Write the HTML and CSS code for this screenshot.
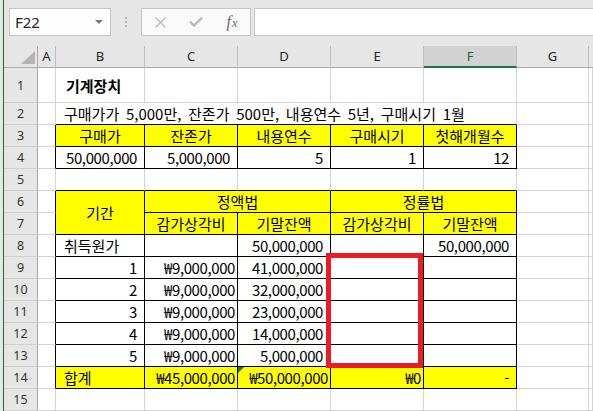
FILE: index.html
```html
<!DOCTYPE html>
<html lang="ko">
<head>
<meta charset="utf-8">
<title>Sheet</title>
<link rel="stylesheet" href="styles.css">
</head>
<body>
<div class="app">
  <div class="toolbar">
    <div class="namebox"><span class="nbtext">F22</span><span class="caret"></span></div>
    <div class="grip"><i></i><i></i><i></i></div>
    <div class="fxbtns">
      <span class="slot"><svg width="11" height="11" viewBox="0 0 11 11"><path d="M0.5 0.5 L10.5 10.5 M10.5 0.5 L0.5 10.5" stroke="#b9b9b9" stroke-width="1.3" fill="none"/></svg></span>
      <span class="slot"><svg width="14" height="10" viewBox="0 0 14 10"><path d="M1 4.5 L5 8.5 L13 0.8" stroke="#b9b9b9" stroke-width="2.4" fill="none"/></svg></span>
      <span class="slot fx"><i class="ff">f</i><i class="fxx">x</i></span>
    </div>
    <div class="formula"></div>
  </div>

  <div class="sheet">
    <!-- header -->
    <div class="corner"><span class="tri"></span></div>
    <div class="ch">A</div><div class="ch">B</div><div class="ch">C</div><div class="ch">D</div><div class="ch">E</div><div class="ch sel">F</div><div class="ch">G</div><div class="ch last"></div>

    <!-- row 1 -->
    <div class="rh">1</div><div></div><div class="l b">기계장치</div><div></div><div></div><div></div><div></div><div></div><div></div>

    <!-- row 2 -->
    <div class="rh">2</div><div></div><div class="l span5 kb ws">구매가가 5,000만, 잔존가 500만, 내용연수 5년, 구매시기 1월</div><div></div><div></div>

    <!-- row 3 -->
    <div class="rh">3</div><div class="kr"></div>
    <div class="k y c">구매가</div><div class="k y c">잔존가</div><div class="k y c">내용연수</div><div class="k y c">구매시기</div><div class="k y c">첫해개월수</div>
    <div></div><div></div>

    <!-- row 4 -->
    <div class="rh">4</div><div class="kr"></div>
    <div class="k r">50,000,000</div><div class="k r">5,000,000</div><div class="k r">5</div><div class="k r">1</div><div class="k r">12</div>
    <div></div><div></div>

    <!-- row 5 -->
    <div class="rh">5</div><div></div>
    <div class="kb"></div><div class="kb"></div><div class="kb"></div><div class="kb"></div><div class="kb"></div>
    <div></div><div></div>

    <!-- row 6 -->
    <div class="rh">6</div><div class="kr"></div>
    <div class="k y c rows2">기간</div>
    <div class="k y c span2">정액법</div>
    <div class="k y c span2">정률법</div>
    <div></div><div></div>

    <!-- row 7 -->
    <div class="rh">7</div><div class="kr"></div>
    <div class="k y c">감가상각비</div><div class="k y c">기말잔액</div><div class="k y c">감가상각비</div><div class="k y c">기말잔액</div>
    <div></div><div></div>

    <!-- row 8 -->
    <div class="rh">8</div><div class="kr"></div>
    <div class="k l">취득원가</div><div class="k"></div><div class="k r">50,000,000</div><div class="k"></div><div class="k r">50,000,000</div>
    <div></div><div></div>

    <!-- row 9 -->
    <div class="rh">9</div><div class="kr"></div>
    <div class="k r">1</div><div class="k rw">₩9,000,000</div><div class="k r">41,000,000</div><div class="k"></div><div class="k"></div>
    <div></div><div></div>

    <!-- row 10 -->
    <div class="rh">10</div><div class="kr"></div>
    <div class="k r">2</div><div class="k rw">₩9,000,000</div><div class="k r">32,000,000</div><div class="k"></div><div class="k"></div>
    <div></div><div></div>

    <!-- row 11 -->
    <div class="rh">11</div><div class="kr"></div>
    <div class="k r">3</div><div class="k rw">₩9,000,000</div><div class="k r">23,000,000</div><div class="k"></div><div class="k"></div>
    <div></div><div></div>

    <!-- row 12 -->
    <div class="rh">12</div><div class="kr"></div>
    <div class="k r">4</div><div class="k rw">₩9,000,000</div><div class="k r">14,000,000</div><div class="k"></div><div class="k"></div>
    <div></div><div></div>

    <!-- row 13 -->
    <div class="rh">13</div><div class="kr"></div>
    <div class="k r">5</div><div class="k rw">₩9,000,000</div><div class="k r">5,000,000</div><div class="k"></div><div class="k"></div>
    <div></div><div></div>

    <!-- row 14 -->
    <div class="rh">14</div><div class="kr"></div>
    <div class="k y l">합계</div><div class="k y rw">₩45,000,000</div><div class="k y rw flag"><span class="errtri"></span>₩50,000,000</div><div class="k y rw">₩0</div><div class="k y r">-</div>
    <div></div><div></div>

    <!-- row 15 -->
    <div class="rh">15</div><div></div><div></div><div></div><div></div><div></div><div></div><div></div><div></div>

    <div class="redbox"></div>
  </div>
</div>
</body>
</html>
```

FILE: styles.css
```css
* { box-sizing: border-box; }
html, body { margin: 0; padding: 0; }
body {
  background: #e6e6e6;
  width: 593px;
  height: 411px;
  overflow: hidden;
  font-family: "Noto Sans CJK KR", sans-serif;
}
.app {
  margin-left: 3px;
  border-left: 1px solid #1f6b41;
  height: 411px;
  display: flex;
  flex-direction: column;
}

/* toolbar */
.toolbar {
  height: 46px;
  flex: none;
  display: flex;
  align-items: flex-start;
  padding-top: 8px;
  padding-left: 5px;
}
.namebox {
  width: 102px;
  height: 28px;
  border: 1px solid #c6c6c6;
  background: #fdfdfd;
  display: flex;
  align-items: center;
  padding-left: 5px;
  font-family: "Noto Sans", sans-serif;
  font-size: 15px;
  color: #262626;
}
.caret {
  margin-left: auto;
  margin-right: 7px;
  width: 0;
  height: 0;
  border-left: 4px solid transparent;
  border-right: 4px solid transparent;
  border-top: 4px solid #7a7a7a;
}
.grip {
  width: 30px;
  height: 28px;
  display: flex;
  flex-direction: column;
  align-items: center;
  justify-content: center;
  gap: 2px;
}
.grip i { display: block; width: 2px; height: 2px; background: #b4b4b4; }
.fxbtns {
  width: 110px;
  height: 28px;
  border: 1px solid #c6c6c6;
  background: #fafafa;
  display: flex;
  align-items: center;
}
.slot {
  width: 36px;
  height: 26px;
  display: flex;
  align-items: center;
  justify-content: center;
}
.fx {
  font-family: "Liberation Serif", serif;
  color: #666;
  padding-bottom: 1px;
}
.ff { font-size: 16px; }
.fxx { font-size: 12px; margin-left: 1px; padding-top: 4px; }
.formula {
  flex: 1;
  margin-left: 3px;
  height: 28px;
  border: 1px solid #c6c6c6;
  border-right: none;
  background: #fff;
}

/* sheet */
.sheet {
  flex: 1;
  display: grid;
  grid-template-columns: 34px 18px 89px 93px 93px 93px 93px 72px 1fr;
  grid-template-rows: 22px 35px repeat(14, 22px);
  background: #fff;
  position: relative;
  font-size: 15px;
  line-height: 21px;
  color: #000;
}
.sheet > div {
  border-right: 1px solid #d4d4d4;
  border-bottom: 1px solid #d4d4d4;
  display: flex;
  align-items: center;
  white-space: nowrap;
  min-width: 0;
}
.sheet > .corner {
  background: #e6e6e6;
  border-right-color: #ababab;
  border-bottom-color: #ababab;
  position: relative;
}
.tri {
  position: absolute;
  right: 2px;
  bottom: 3px;
  width: 0;
  height: 0;
  border-left: 14px solid transparent;
  border-bottom: 13px solid #b4b4b4;
}
.sheet > .ch {
  background: #e6e6e6;
  border-right-color: #bdbdbd;
  border-bottom-color: #ababab;
  justify-content: center;
  font-family: "Noto Sans", sans-serif;
  font-size: 13px;
  color: #262626;
}
.sheet > .ch.last { border-right: none; }
.sheet > .ch.sel {
  background: #d2d2d2;
  border-bottom: 2px solid #217346;
  color: #1e5f3b;
}
.sheet > .rh {
  background: #e6e6e6;
  border-right-color: #ababab;
  border-bottom-color: #cfcfcf;
  justify-content: center;
  font-family: "Noto Sans", sans-serif;
  font-size: 12.5px;
  color: #333;
}

.sheet > .k { border-right-color: #000; border-bottom-color: #000; }
.sheet > .kr { border-right-color: #000; }
.sheet > .kb { border-bottom-color: #000; }
.y { background: #ffff00; }
.c { justify-content: center; }
.r { justify-content: flex-end; padding-right: 7px; letter-spacing: -0.4px; }
.rw { justify-content: flex-end; padding-right: 2px; letter-spacing: -0.4px; }
.l { justify-content: flex-start; padding-left: 8px; }
.ws { word-spacing: 2.5px; }
.b { font-weight: 700; padding-left: 10px; }
.span5 { grid-column: span 5; }
.span2 { grid-column: span 2; }
.rows2 { grid-row: span 2; }
.flag { position: relative; }
.errtri {
  position: absolute;
  left: 0;
  top: 0;
  width: 0;
  height: 0;
  border-top: 6px solid #217346;
  border-right: 6px solid transparent;
}
.sheet > .redbox {
  position: absolute;
  left: 322px;
  top: 207px;
  width: 97px;
  height: 115px;
  border: 5px solid #ed1c24;
}
```
